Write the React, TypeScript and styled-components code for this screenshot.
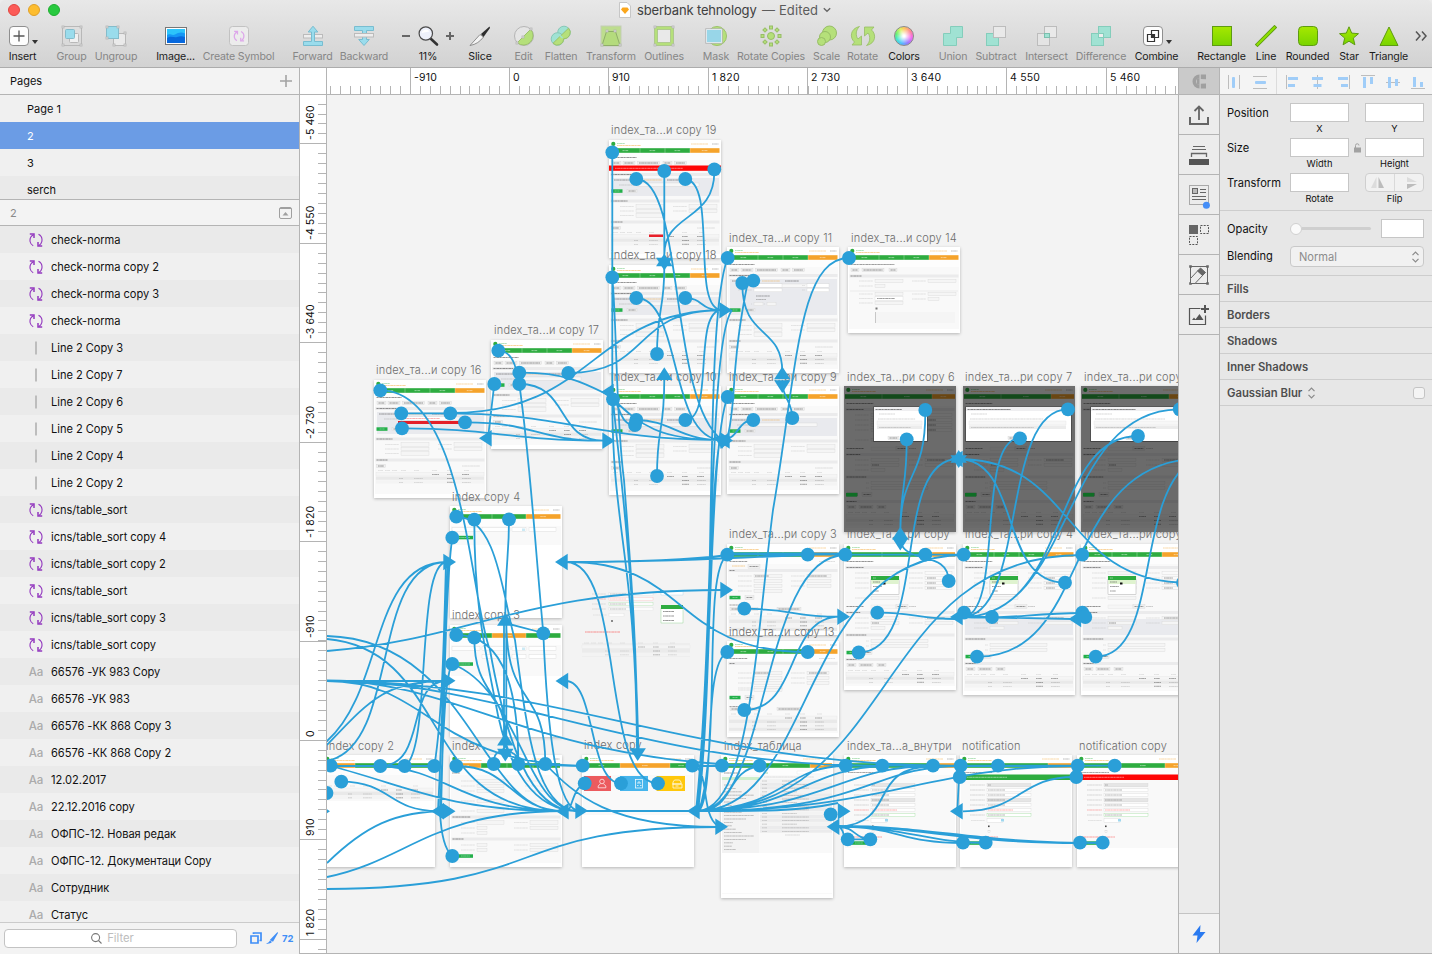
import React from "react";
import styled, { createGlobalStyle, css } from "styled-components";

const BLUE = "#2a9fd8";
const GREEN = "#2eac40";
const ORANGE = "#f5a32b";
const EDGE = "#b4b4b4";

const Global = createGlobalStyle`
  * { box-sizing: border-box; }
  body { margin: 0; font-family: Inter, "Liberation Sans", sans-serif; font-size: 12px; color: #111; overflow: hidden; }
  svg { display: block; flex: none; }
`;

/* ---------- window ---------- */

const Window = styled.div`
  width: 1432px;
  height: 954px;
  display: flex;
  flex-direction: column;
  background: #ececec;
  overflow: hidden;
`;
const Chrome = styled.header`
  height: 68px;
  background: linear-gradient(#e8e8e8, #d2d2d2);
  border-bottom: 1px solid #acacac;
  border-radius: 5px 5px 0 0;
`;
const TitleBar = styled.div`
  height: 21px;
  display: flex;
  align-items: center;
  padding: 0 0 1px 8px;
`;
const Light = styled.i<{ $c: string; $b: string }>`
  width: 12px;
  height: 12px;
  margin-right: 8px;
  border-radius: 50%;
  background: ${(p) => p.$c};
  border: 1px solid ${(p) => p.$b};
`;
const Title = styled.div`
  display: flex;
  align-items: center;
  margin-left: 551px;
  font-size: 13px;
  letter-spacing: -0.16px;
  color: #404040;
  white-space: pre;
  svg { margin-right: 6px; }
  svg:last-child { margin: 0 0 0 5px; }
`;
const Edited = styled.span`
  color: #5c5c5c;
  letter-spacing: 0.1px;
  margin-left: 2px;
`;
const Toolbar = styled.div`
  display: flex;
  height: 46px;
  padding-top: 4px;
`;
const Tool = styled.div<{ $w: number; $gap: number; $off?: boolean }>`
  width: ${(p) => p.$w}px;
  margin-left: ${(p) => p.$gap}px;
  flex: none;
  display: flex;
  flex-direction: column;
  align-items: center;
  color: ${(p) => (p.$off ? "#868686" : "#1c1c1c")};
`;
const ToolIcon = styled.div`
  height: 22px;
  display: flex;
  justify-content: center;
  align-items: center;
`;
const ToolLabel = styled.span`
  font-size: 10.6px;
  letter-spacing: -0.16px;
  line-height: 14px;
  margin-top: 3px;
  white-space: nowrap;
`;

const Body = styled.div`
  height: 886px;
  display: flex;
`;

/* ---------- left sidebar ---------- */

const Sidebar = styled.aside`
  width: 300px;
  flex: none;
  display: flex;
  flex-direction: column;
  border-right: 1px solid ${EDGE};
  background: #efefef;
`;
const SideHead = styled.div<{ $h: number; $muted?: boolean }>`
  height: ${(p) => p.$h}px;
  flex: none;
  display: flex;
  align-items: center;
  justify-content: space-between;
  padding: 0 7px 0 10px;
  background: #f3f3f3;
  border-bottom: 1px solid ${EDGE};
  font-size: 11px;
  color: ${(p) => (p.$muted ? "#8a8a8a" : "#111")};
`;
const PageList = styled.div`
  height: 105px;
  flex: none;
  overflow: hidden;
  border-bottom: 1px solid ${EDGE};
`;
const PageRow = styled.div<{ $on?: boolean; $alt?: boolean }>`
  height: 27px;
  padding: 1px 0 0 27px;
  line-height: 27px;
  font-size: 11px;
  background: ${(p) => (p.$on ? "#6b9ce5" : p.$alt ? "#eaeaea" : "#f0f0f0")};
  color: ${(p) => (p.$on ? "#fff" : "#111")};
`;
const LayerList = styled.div`
  flex: 1;
  overflow: hidden;
`;
const LayerRow = styled.div`
  height: 27px;
  display: flex;
  align-items: center;
  padding-top: 1px;
  font-size: 11.1px;
  letter-spacing: -0.04px;
  background: #f0f0f0;
  &:nth-child(odd) { background: #eaeaea; }
`;
const LayerIcon = styled.span`
  width: 51px;
  flex: none;
  padding-left: 21px;
  display: flex;
  justify-content: center;
  color: #ababab;
  font-size: 11.5px;
  font-weight: 500;
`;
const Footer = styled.div`
  height: 32px;
  flex: none;
  display: flex;
  align-items: center;
  padding: 0 0 1px 4px;
  border-top: 1px solid #cbcbcb;
  background: #f3f3f3;
`;
const Filter = styled.div`
  width: 233px;
  height: 19px;
  display: flex;
  align-items: center;
  justify-content: center;
  gap: 5px;
  padding-left: 6px;
  padding-right: 22px;
  border: 1px solid #c3c3c3;
  border-radius: 4px;
  background: #fff;
  color: #bdbdbd;
  font-size: 11.3px;
`;
const FooterIcons = styled.div`
  display: flex;
  align-items: center;
  gap: 4px;
  margin-left: 13px;
  color: #3f8ef7;
  font-size: 9.5px;
  font-weight: 700;
`;

/* ---------- canvas and rulers ---------- */

const Center = styled.main`
  width: 878px;
  flex: none;
  display: grid;
  grid-template-columns: 27px 851px;
  grid-template-rows: 27px 859px;
`;
const Corner = styled.div`
  background: #fff;
  border-right: 1px solid ${EDGE};
  border-bottom: 1px solid ${EDGE};
`;
const RulerSvg = styled.svg`
  background: #fff;
  font-size: 10.5px;
  fill: #111;
`;
const Canvas = styled.div`
  position: relative;
  overflow: hidden;
  background: #f3f3f3;
  border-bottom: 1px solid ${EDGE};
`;
const Board = styled.svg<{ $x: number; $y: number; $bare?: boolean }>`
  position: absolute;
  left: ${(p) => p.$x - 327}px;
  top: ${(p) => p.$y - 95}px;
  ${(p) =>
    !p.$bare &&
    css`
      background: #fff;
      box-shadow: 0 1px 3px rgba(0, 0, 0, 0.26);
    `}
`;
const BoardName = styled.span<{ $x: number; $y: number }>`
  position: absolute;
  left: ${(p) => p.$x - 327}px;
  top: ${(p) => p.$y - 95 - 8}px;
  font-size: 11px;
  font-weight: 300;
  line-height: 16px;
  letter-spacing: 0.2px;
  white-space: nowrap;
  color: #6c6c6c;
`;
const Links = styled.svg`
  position: absolute;
  inset: 0;
`;

/* ---------- right side ---------- */

const Strip = styled.nav`
  width: 42px;
  flex: none;
  display: flex;
  flex-direction: column;
  background: #ebebeb;
  border-left: 1px solid ${EDGE};
  border-right: 1px solid ${EDGE};
`;
const StripCell = styled.div<{ $h?: number; $dark?: boolean; $last?: boolean }>`
  height: ${(p) => p.$h ?? 40}px;
  flex: none;
  display: flex;
  align-items: center;
  justify-content: center;
  border-bottom: 1px solid ${EDGE};
  background: ${(p) => (p.$dark ? "#cacaca" : "#ececec")};
  ${(p) =>
    p.$last &&
    css`
      margin-top: auto;
      border-top: 1px solid #c4c4c4;
      background: #f2f2f2;
    `}
`;
const Inspector = styled.aside`
  flex: 1;
  background: #e7e7e7;
  border-bottom: 1px solid ${EDGE};
`;
const AlignRow = styled.div`
  height: 27px;
  background: #f4f4f4;
  border-bottom: 1px solid ${EDGE};
`;
const Group = styled.section<{ $h: number }>`
  height: ${(p) => p.$h}px;
  padding: 8px 8px 0 7px;
  border-bottom: 1px solid #cdcdcd;
  font-size: 11.1px;
`;
const Row = styled.div<{ $h: number }>`
  height: ${(p) => p.$h}px;
  display: flex;
  align-items: flex-start;
`;
const RowName = styled.span`
  width: 63px;
  line-height: 20px;
`;
const Col = styled.div<{ $gap?: number; $w?: number }>`
  width: ${(p) => p.$w ?? 59}px;
  margin-left: ${(p) => p.$gap ?? 0}px;
  font-size: 9.3px;
  line-height: 13px;
  text-align: center;
`;
const Input = styled.div`
  height: 19px;
  background: #fff;
  border: 1px solid #c6c6c6;
`;
const Lock = styled.div`
  width: 16px;
  height: 19px;
  display: flex;
  align-items: center;
  justify-content: center;
`;
const Flip = styled.div`
  height: 19px;
  display: flex;
  align-items: center;
  justify-content: space-around;
  border: 1px solid #cfcfcf;
  border-radius: 4px;
  background: #f1f1f1;
`;
const Divider = styled.i`
  width: 1px;
  height: 17px;
  background: #d9d9d9;
`;
const Slider = styled.div`
  width: 81px;
  height: 19px;
  margin-right: 10px;
  display: flex;
  align-items: center;
`;
const Knob = styled.i`
  width: 12px;
  height: 12px;
  flex: none;
  border-radius: 50%;
  background: #fafafa;
  border: 1px solid #d0d0d0;
`;
const Track = styled.i`
  flex: 1;
  height: 3px;
  border-radius: 0 2px 2px 0;
  background: #cfcfcf;
`;
const Select = styled.div`
  width: 134px;
  height: 21px;
  display: flex;
  align-items: center;
  justify-content: space-between;
  padding: 0 3px 0 8px;
  border: 1px solid #c9c9c9;
  border-radius: 4px;
  background: #f1f1f1;
  color: #8c8c8c;
`;
const Section = styled.div`
  height: 26px;
  display: flex;
  align-items: center;
  padding: 1px 7px 0 7px;
  border-bottom: 1px solid #cdcdcd;
  font-size: 11.3px;
  font-weight: 600;
  color: #4e4e4e;
  svg { margin-left: 5px; }
`;
const Check = styled.i`
  width: 12px;
  height: 12px;
  margin-left: auto;
  border: 1px solid #c4c4c4;
  border-radius: 3px;
  background: #f4f4f4;
`;

/* ---------- icons ---------- */

const aqua = "#9adcec";
const mint = "#a0e2d3";
const lime = "#b5e07a";

const SymPaths = () => (
  <g>
    <path d="M4.500 1.700C1.600 3.200.6 6.200 1.200 9c.4 1.800 1.600 3 3 3.700" />
    <path d="M.8 1h4.200v4" strokeWidth="1.500" />
    <path d="M9.500 1.300c2.900 1.500 3.900 4.500 3.300 7.300-.4 1.800-1.400 3-2.800 3.900" />
    <path d="M13.200 13H9V9" strokeWidth="1.500" />
  </g>
);
const Sym = () => (
  <svg width="14" height="14" viewBox="0 0 14 14" fill="none" stroke="#9338bf" strokeWidth="1.100"><SymPaths /></svg>
);
const Icon = ({ children, w = 22 }: { children: React.ReactNode; w?: number }) => (
  <svg width={w} height={22} viewBox={`0 0 ${w} 22`} fill="none">{children}</svg>
);
const dots = (pts: number[][]) =>
  pts.map(([x, y]) => <rect key={`${x}-${y}`} x={x - 1} y={y - 1} width={2} height={2} fill="#e8e8e8" stroke="#b5b5b5" strokeWidth={0.8} />);

const icons: Record<string, React.ReactNode> = {
  insert: (
    <Icon w={30}>
      <rect x="1.500" y="1.500" width="19" height="19" rx="3.500" fill="#fdfdfd" stroke="#8f8f8f" />
      <path d="M11 5.500v11M5.500 11h11" stroke="#555" strokeWidth="1.300" />
      <path d="M24 15h6l-3 4z" fill="#333" />
    </Icon>
  ),
  group: (
    <Icon>
      <rect x="1.500" y="1.500" width="19" height="19" stroke="#b8b8b8" />
      <rect x="8.500" y="8.500" width="9" height="9" rx="1" fill="#f0f0f0" stroke="#b8b8b8" />
      <rect x="4.500" y="4.500" width="9" height="9" rx="1" fill={aqua} stroke="#84bccb" />
      {dots([[2, 2], [20, 2], [2, 20], [20, 20]])}
    </Icon>
  ),
  ungroup: (
    <Icon>
      <rect x="8.500" y="8.500" width="12" height="12" fill="#eaeaea" stroke="#b8b8b8" />
      {dots([[20, 8], [20, 20], [9, 20]])}
      <rect x="1.500" y="1.500" width="12" height="12" fill={aqua} stroke="#84bccb" />
      {dots([[2, 2], [13, 2], [2, 13]])}
    </Icon>
  ),
  image: (
    <Icon>
      <rect x=".5" y="2.500" width="21" height="17" fill="#fff" stroke="#777" />
      <rect x="2" y="4" width="18" height="14" fill="#2cc4fb" />
      <path d="M2 10c3-2 5 1 8-.5s6-3 10-1V18H2z" fill="#1597f5" />
      <path d="M2 13c4-3 7 0 10-1s5-1 8 0v6H2z" fill="#0768dd" />
    </Icon>
  ),
  forward: (
    <Icon>
      <rect x="1.500" y="9.500" width="19" height="3.500" fill="#eee" stroke="#bbb" />
      <path d="M1.500 16.500h8V7H6.200L11 1.200 15.800 7h-3.300v9.500h8v4h-19z" fill={aqua} stroke="#78bdd0" />
    </Icon>
  ),
  backward: (
    <Icon>
      <path d="M1.500 1.500h19v4h-7v9h2.800L11 20.500 5.700 14.500h3.800v-9h-8z" fill={aqua} stroke="#78bdd0" />
      <rect x="1.500" y="8.500" width="19" height="3.500" fill="#eee" stroke="#bbb" />
    </Icon>
  ),
  minus: <Icon w={10}><path d="M1 11h8" stroke="#666" strokeWidth="2" /></Icon>,
  plus: <Icon w={10}><path d="M1 11h8M5 7v8" stroke="#666" strokeWidth="2" /></Icon>,
  zoom: (
    <Icon>
      <path d="M13.500 13.500l6.500 6" stroke="#333" strokeWidth="2.600" strokeLinecap="round" />
      <circle cx="8.800" cy="8.500" r="6.700" fill="#eef1fb" stroke="#4a4a4a" strokeWidth="1.200" />
      <path d="M4.500 8a4.500 4.500 0 0 1 8-1.500z" fill="#fff" />
    </Icon>
  ),
  slice: (
    <Icon>
      <path d="M11 9.500l3.500 2.500C11 16.500 7 19.500 1 20.500z" fill="#f4f4f4" stroke="#777" strokeWidth=".8" />
      <path d="M12 9L20.500 1.500 21 3l-6.500 9z" fill="#2d2d2d" />
    </Icon>
  ),
  edit: (
    <Icon>
      <circle cx="11" cy="11" r="9.500" fill="#e5e5e5" stroke="#b5b5b5" />
      <path d="M4.300 17.700A9.500 9.500 0 0 0 17.700 4.300z" fill={lime} stroke="#9cc26a" />
      {dots([[4, 18], [10, 12], [18, 4]])}
    </Icon>
  ),
  flatten: (
    <Icon>
      <g fill={mint} stroke="#86c8b8"><circle cx="14" cy="7.500" r="6.300" /><circle cx="7.500" cy="14" r="6.300" /></g>
      <path d="M3 18.300L18.500 3.200A6.300 6.300 0 0 1 13.700 13.800 6.300 6.300 0 0 1 3 18.300z" fill={lime} stroke="#9cc26a" />
      <path d="M9.500 9l3.500 3.500-1 1L8.500 10z" fill={mint} />
    </Icon>
  ),
  transform: (
    <Icon>
      <rect x="1" y="1" width="20" height="20" fill="#bddd8e" stroke="#c3cdb5" />
      <path d="M6.500 6.500h9l4.500 14H2z" fill="#b4db7d" stroke="#8fae69" />
      {dots([[2, 20], [20, 20], [7, 6], [15, 6]])}
    </Icon>
  ),
  outlines: (
    <Icon>
      <rect x="3" y="3" width="16" height="16" fill="#e9e9e9" stroke={lime} strokeWidth="3" />
      <rect x="1.500" y="1.500" width="19" height="19" stroke="#a3bf80" strokeWidth=".7" />
      <rect x="4.500" y="4.500" width="13" height="13" stroke="#a3bf80" strokeWidth=".7" />
      {dots([[2, 2], [20, 2], [2, 20], [20, 20]])}
    </Icon>
  ),
  mask: (
    <Icon>
      <circle cx="12" cy="11" r="9.500" fill={lime} stroke="#9cc26a" />
      <rect x="1.500" y="4.500" width="15" height="13" fill="#98d6e8" stroke="#e4eef3" />
      <rect x=".7" y="3.700" width="16.600" height="14.600" stroke="#b4b4b4" strokeWidth=".8" />
    </Icon>
  ),
  copies: (
    <Icon>
      <g fill={lime} stroke="#97bd66">
        <circle cx="11" cy="11" r="3.500" />
        {[0, 45, 90, 135, 180, 225, 270, 315].map((a) => (
          <rect key={a} x="9.500" y="1" width="3" height="3" transform={`rotate(${a} 11 11)`} />
        ))}
      </g>
    </Icon>
  ),
  scale: (
    <Icon>
      <g fill={lime} stroke="#97bd66">
        <circle cx="13.500" cy="8" r="7" />
        <circle cx="9" cy="12" r="5.500" />
        <circle cx="5.500" cy="16.500" r="4" />
      </g>
    </Icon>
  ),
  rotate: (
    <Icon w={26}>
      <g fill={lime} stroke="#97bd66" strokeWidth=".8">
        <path d="M9.500 1.500C0 3.500-.5 13 4.500 17L2 20h9.500v-9L8 14C5.500 11 5.500 5 9.500 1.500z" />
        <path d="M16.500 20.500c9.500-2 10-11.500 5-15.500L24 2h-9.500v9L18 8c2.500 3 2.500 9-1.500 12.500z" />
      </g>
    </Icon>
  ),
  union: <Icon><path d="M8.500 1.500h12v11h-6v8h-13v-12h7z" fill={mint} stroke="#84cdbb" /></Icon>,
  subtract: (
    <Icon>
      <rect x="1.500" y="8.500" width="12" height="12" fill={mint} stroke="#84cdbb" />
      <rect x="8.500" y="1.500" width="12" height="11" fill="#e9e9e9" stroke="#bcbcbc" />
    </Icon>
  ),
  intersect: (
    <Icon>
      <rect x="1.500" y="8.500" width="12" height="12" fill="#e4e4e4" stroke="#bcbcbc" />
      <rect x="8.500" y="1.500" width="12" height="11" fill="#e9e9e9" stroke="#bcbcbc" />
      <rect x="8.500" y="8.500" width="5" height="4" fill={mint} stroke="#7cbfae" />
    </Icon>
  ),
  difference: (
    <Icon>
      <rect x="1.500" y="8.500" width="12" height="12" fill={mint} stroke="#84cdbb" />
      <rect x="8.500" y="1.500" width="12" height="11" fill={mint} stroke="#84cdbb" />
      <rect x="8.500" y="8.500" width="5" height="4" fill="#eee" stroke="#84cdbb" />
    </Icon>
  ),
  combine: (
    <Icon w={30}>
      <rect x="1.500" y="1.500" width="19" height="19" rx="3.500" fill="#fdfdfd" stroke="#8f8f8f" />
      <path d="M5.500 9.500h7v7h-7zM9.500 5.500h7v7h-7z" stroke="#333" strokeWidth="1.200" />
      <rect x="9.500" y="9.500" width="3" height="3" fill="#333" />
      <path d="M24 15h6l-3 4z" fill="#333" />
    </Icon>
  ),
  rectangle: <Icon><rect x="1.500" y="1.500" width="19" height="19" fill="url(#lime)" stroke="#5e9b12" /></Icon>,
  line: <Icon><path d="M2.500 19.500L19.500 2.500" stroke="#5e9b12" strokeWidth="3.800" strokeLinecap="square" /><path d="M2.500 19.500L19.500 2.500" stroke="#8fe000" strokeWidth="2" strokeLinecap="square" /></Icon>,
  rounded: <Icon><rect x="1.500" y="1.500" width="19" height="19" rx="4" fill="url(#lime)" stroke="#5e9b12" /></Icon>,
  star: <Icon><path d="M11 1.800l2.700 6.300 6.800.6-5.200 4.400 1.600 6.700L11 16.200l-5.900 3.600 1.600-6.700L1.500 8.700l6.800-.6z" fill="url(#lime)" stroke="#5e9b12" /></Icon>,
  triangle: <Icon><path d="M11 2l9 18.500H2z" fill="url(#lime)" stroke="#5e9b12" /></Icon>,
  more: <Icon w={12}><path d="M1 6.500l4 4.500-4 4.500M7 6.500l4 4.500-4 4.500" stroke="#555" strokeWidth="1.500" /></Icon>,
  symbol: (
    <Icon>
      <rect x="1.500" y="1.500" width="19" height="19" rx="3" fill="#ececec" stroke="#c2c2c2" />
      <g transform="translate(5.500 5.500) scale(.8)" stroke="#dda6ea" strokeWidth="1.600"><SymPaths /></g>
    </Icon>
  ),
};

const Wheel = styled.i`
  width: 20px;
  height: 20px;
  border-radius: 50%;
  border: 1px solid #8a8a8a;
  background: radial-gradient(circle, #fff 8%, rgba(255, 255, 255, 0.1) 60%),
    conic-gradient(#ffc04a, #ff7a8a 15%, #f45af0 28%, #8a6cff 42%, #3fb4ff 55%, #2fe6c8 68%, #5cf060 80%, #d8f050 92%, #ffc04a);
`;

// id, label, left edge, right edge, dimmed
const tools: [string, string, number, number, boolean?][] = [
  ["insert", "Insert", 9, 36], ["group", "Group", 57, 86, true], ["ungroup", "Ungroup", 95, 137, true],
  ["image", "Image...", 157, 194], ["symbol", "Create Symbol", 203, 274, true],
  ["forward", "Forward", 293, 332, true], ["backward", "Backward", 341, 387, true],
  ["minus", "", 401, 411], ["zoom", "11%", 417, 439], ["plus", "", 445, 455], ["slice", "Slice", 468, 492],
  ["edit", "Edit", 514, 533, true], ["flatten", "Flatten", 544, 578, true], ["transform", "Transform", 586, 636, true],
  ["outlines", "Outlines", 644, 684, true], ["mask", "Mask", 703, 729, true], ["copies", "Rotate Copies", 737, 805, true],
  ["scale", "Scale", 813, 840, true], ["rotate", "Rotate", 848, 877, true], ["colors", "Colors", 888, 920],
  ["union", "Union", 939, 967, true], ["subtract", "Subtract", 975, 1017, true], ["intersect", "Intersect", 1025, 1068, true],
  ["difference", "Difference", 1076, 1126, true], ["combine", "Combine", 1135, 1178],
  ["rectangle", "Rectangle", 1197, 1246], ["line", "Line", 1256, 1276], ["rounded", "Rounded", 1286, 1329],
  ["star", "Star", 1339, 1359], ["triangle", "Triangle", 1369, 1408], ["more", "", 1415, 1427],
];

/* ---------- artboard thumbnails ---------- */

type R = { x: number; y: number; w: number; h: number; f: string; s?: string };
const Box = ({ x, y, w, h, f, s }: R) => (
  <rect x={x} y={y} width={w} height={h} fill={f} stroke={s} strokeWidth={s ? 0.3 : 0} />
);
const Ink = ({ x, y, w, c = "#777", t = 0.8 }: { x: number; y: number; w: number; c?: string; t?: number }) => (
  <path d={`M${x} ${y}h${w}`} stroke={c} strokeWidth={t} strokeDasharray="1.700 .25 .9 .2 2.600 .3" opacity={0.58} />
);
const Field = ({ x, y, w = 28, lx, lw = 14, f = "#f5f5f5" }: { x: number; y: number; w?: number; lx?: number; lw?: number; f?: string }) => (
  <g>
    <Ink x={lx ?? x - lw - 2} y={y} w={lw} c="#bbb" t={0.6} />
    <Box x={x} y={y - 1.700} w={w} h={3.400} f={f} s="#cdcdcd" />
  </g>
);
const Bar = ({ y, w = 13 }: { y: number; w?: number }) => (
  <g><Box x={1.500} y={y - 1.500} w={109} h={3} f="#ebebec" /><Ink x={2.500} y={y} w={w} c="#222" /></g>
);
const Btn = ({ x, y, w }: { x: number; y: number; w: number }) => (
  <g><Box x={x} y={y - 1.700} w={w} h={3.400} f="#efefef" s="#ccc" /><Ink x={x + 1.500} y={y} w={w - 3} c="#333" /></g>
);
const Go = ({ y, w = 11, x = 2.500 }: { y: number; w?: number; x?: number }) => (
  <g><Box x={x} y={y - 1.700} w={w} h={3.500} f="#23b04a" /><Ink x={x + 3} y={y} w={w - 6} c="#fff" t={0.6} /></g>
);
const Table = ({ y, rows = 2 }: { y: number; rows?: number }) => (
  <g>
    {[4, 11, 18, 27, 40, 58, 73, 90].map((x) => <Ink key={x} x={x} y={y} w={5} c="#aaa" t={0.5} />)}
    <Box x={2} y={y + 2} w={108} h={3.500} f="#f5f5f5" s="#e0e0e0" />
    <Ink x={58} y={y + 4} w={7} c="#333" t={0.7} /><Ink x={73} y={y + 4} w={6} c="#333" t={0.7} /><Ink x={88} y={y + 4} w={7} c="#333" t={0.7} />
    {Array.from({ length: rows }, (_, i) => (
      <g key={i}>
        <Box x={2} y={y + 6 + i * 3.800} w={108} h={3.300} f={i % 2 ? "#f4f4f4" : "#e9e9e9"} />
        <Ink x={25} y={y + 8 + i * 3.800} w={4} c="#888" t={0.6} /><Ink x={40} y={y + 8 + i * 3.800} w={9} c="#999" t={0.6} />
        <Ink x={73} y={y + 8 + i * 3.800} w={7} c="#333" t={0.7} /><Ink x={88} y={y + 8 + i * 3.800} w={9} c="#888" t={0.6} />
      </g>
    ))}
  </g>
);
type Seg = [number, number, "g" | "o"];
const Head = ({ nav, h }: { nav: Seg[]; h: number }) => (
  <g>
    <Box x={1} y={13} w={110} h={h - 17} f="#f9f9f9" />
    <Box x={1} y={13} w={110} h={7} f="#fdfdfd" />
    <circle cx={4.300} cy={3.900} r={2.100} fill={GREEN} />
    <Ink x={8} y={3.500} w={8} c={GREEN} t={0.6} />
    <Ink x={8} y={5.500} w={24} c={ORANGE} t={0.8} />
    <Ink x={82} y={4} w={17} c={ORANGE} t={0.7} />
    <Ink x={103} y={4} w={6.500} c="#666" t={0.7} />
    {nav.map(([a, b, k]) => (
      <g key={a}>
        <Box x={a} y={8.200} w={b - a} h={4.600} f={k === "g" ? GREEN : ORANGE} />
        <Ink x={(a + b) / 2 - 3} y={10.600} w={6} c="#fff" t={0.8} />
      </g>
    ))}
    {nav.slice(1).map(([a]) => <path key={a} d={`M${a} 8.200v4.600`} stroke="#fff" strokeWidth=".3" />)}
  </g>
);
const four: Seg[] = [[2, 31, "g"], [31, 56, "g"], [56, 81, "g"], [81, 110.500, "o"]];
const three: Seg[] = [[1, 38, "g"], [38, 88, "g"], [88, 111, "o"]];

const Detail = ({ h, alert, err, ext = 0 }: { h: number; alert?: boolean; err?: boolean; ext?: number }) => {
  const a = alert ? 6 : 0;
  const b = a + ext;
  return (
    <g>
      <Head nav={four} h={h} />
      <Ink x={2.500} y={17.500} w={25} c="#222" />
      <Btn x={3} y={23} w={9} /><Btn x={14} y={23} w={12} /><Btn x={28.500} y={23} w={22} /><Btn x={54} y={23} w={9} /><Btn x={65.500} y={23} w={12} />
      {alert && <g><Box x={0} y={25.500} w={112} h={5.300} f="#fe0505" /><Ink x={6} y={28.300} w={68} c="#fff" t={0.8} /></g>}
      <Bar y={28.500 + a} w={20} />
      <Box x={3} y={32 + a} w={107} h={18 + ext} f="#e9eaee" />
      <Ink x={5} y={34 + a} w={25} c="#333" /><Ink x={35} y={34 + a} w={18} c={ORANGE} t={0.7} /><Ink x={58} y={34 + a} w={14} c="#333" />
      <Box x={28} y={37 + a} w={62} h={3.200} f="#f7f7f7" s="#ccc" />
      <Ink x={10} y={39 + a} w={16} c="#999" t={0.6} />
      {err && <g><Box x={27} y={37} w={50} h={3} f="#fff" /><Ink x={24} y={38.500} w={42} c="#e22" t={0.6} /><Box x={24} y={41} w={70} h={3} f="#e31f28" /></g>}
      {ext > 12 && (
        <g>
          <Field x={27} y={38.500} f="#fff" /><Field x={27} y={43} f="#fff" /><Field x={80} y={38.500} w={22} lw={3} f="#fff" /><Field x={80} y={43} w={22} lw={3} f="#fff" />
          <Ink x={29} y={49} w={14} c="#333" t={0.7} /><Ink x={29} y={52.500} w={10} c="#666" t={0.7} />
          <Field x={27} y={57} w={9} lw={1} /><Field x={40} y={57} w={9} lw={1} />
        </g>
      )}
      <Go y={45 + b} /><Btn x={18} y={45 + b} w={10} />
      <Bar y={55 + b} w={16} />
      {[60.500, 65, 69.500].map((y) => <Field key={y} x={27} y={y + b} />)}
      <Field x={80} y={60.500 + b} /><Field x={80} y={65 + b} />
      <Bar y={76 + b} w={11} />
      <Btn x={2.500} y={82 + b} w={9} />
      <Ink x={88} y={82 + b} w={18} c="#999" t={0.5} />
      <Table y={86.500 + b} />
      {alert && <Box x={40} y={94.500} w={14} h={2.500} f="#e8202a" />}
    </g>
  );
};

const Simple = () => (
  <g>
    <Head nav={four} h={86} />
    <Ink x={2.500} y={17.500} w={44} c="#333" />
    <Btn x={3} y={23} w={8} /><Btn x={14} y={23} w={22} /><Btn x={41} y={23} w={8} />
    <Bar y={29} w={11} />
    <Field x={27} y={34} /><Field x={27} y={39} w={10} /><Field x={80} y={34} />
    <path d="M2 44h108" stroke="#ddd" strokeWidth=".5" />
    <Field x={27} y={47} /><Field x={27} y={51.500} f="#fff" /><Field x={27} y={56} /><Field x={80} y={47} /><Field x={80} y={52} w={11} />
    <Ink x={29} y={51.500} w={18} c="#333" />
    <Box x={27.500} y={60.500} w={2} h={2} f="#777" />
    <Box x={27} y={65} w={80} h={11} f="#f5f5f5" /><path d="M27.500 65v11" stroke="#999" strokeWidth=".5" />
  </g>
);

const Search = ({ h, k = 0 }: { h: number; k?: number }) => (
  <g>
    <Head nav={four} h={h} />
    <Ink x={2.500} y={17.500} w={18} c="#333" />
    <Ink x={92} y={17.500} w={16} c="#999" t={0.5} />
    {k === 0 && <g><Ink x={5} y={22} w={13} c={ORANGE} /><Btn x={21} y={22.500} w={12} /></g>}
    <Bar y={k ? 22.500 : 26.500} w={5} />
    {[32, 37, 42, 47].map((y) => <Field key={y} x={27} y={y} />)}
    {[32, 37, 42].map((y) => <Field key={y} x={80} y={y} w={k ? 22 : 24} />)}
    <Ink x={28} y={32} w={14} c="#333" /><Ink x={82} y={32} w={18} c="#333" />
    {k > 0 && <Field x={27} y={49} />}
    <Go y={53.500 + k / 3} /><Btn x={18} y={53.500 + k / 3} w={9} />
    <Ink x={2.500} y={61 + k / 2} w={16} c="#444" />
    <Btn x={3} y={65 + k / 3} w={28} /><Btn x={50} y={65 + k / 3} w={24} />
    <Table y={70 + k / 3} rows={3} />
  </g>
);

const Registry = ({ h, nav = four, panel, menu = true }: { h: number; nav?: Seg[]; panel?: boolean; menu?: boolean }) => {
  const d = h > 146 ? 4 : 0;
  return (
    <g>
      <Head nav={nav} h={h} />
      <Ink x={2.500} y={17.500} w={27} c="#222" />
      <Bar y={23.500} w={17} />
      {[29, 34, 39, 44, 54].map((y) => <Field key={y} x={27} y={y} />)}
      {[29, 34, 39, 44].map((y) => <Field key={y} x={81} y={y} w={27} f="#fafafa" />)}
      <Ink x={83} y={34} w={9} c="#333" /><Ink x={83} y={39} w={9} c="#333" /><Ink x={83} y={44} w={9} c="#333" />
      <Ink x={2.500} y={62.500} w={17} c="#222" /><Box x={27} y={61} w={25} h={3.500} f="#f6f6f6" s="#ddd" /><Btn x={52} y={62.500} w={12} /><Ink x={65} y={62.500} w={7} c="#999" />
      <Bar y={68.500} w={14} />
      {panel && <Box x={2} y={75} w={108} h={16} f="#e9eaee" />}
      <Field x={27} y={74} /><Field x={27} y={79} /><Field x={27} y={84} w={14} /><Field x={81} y={74} /><Field x={81} y={79} />
      <Ink x={28} y={79} w={7} c="#333" /><Ink x={83} y={74} w={18} c="#333" />
      <Bar y={91 + d} w={20} />
      <Field x={27} y={97 + d} w={57} lw={3} /><Field x={27} y={102 + d} w={57} lw={3} />
      <Go y={108.500 + d} /><Btn x={18} y={108.500 + d} w={10} />
      <Bar y={115.500 + d} w={10} />
      <Btn x={3} y={121 + d} w={9} /><Btn x={15} y={121 + d} w={14} /><Btn x={33} y={121 + d} w={9} />
      <Table y={126.500 + d} />
      {menu && (
        <g>
          <Box x={27} y={35.500} w={28} h={15} f="#fff" s="#777" />
          <Box x={27} y={32} w={28} h={4} f={GREEN} />
          <Box x={27.300} y={36} w={27.400} h={4} f="#dff3cf" />
          <Ink x={29} y={34} w={3} c="#fff" /><Ink x={29} y={38} w={7} c="#333" /><Ink x={29} y={42.500} w={9} c="#333" /><Ink x={29} y={47} w={6} c="#333" />
          <path d="M39 38.500h2.500v2H39z" fill="#111" />
        </g>
      )}
    </g>
  );
};

const Modal = ({ x, w, b }: { x: number; w: number; b: number }) => (
  <g>
    <Registry h={146} nav={three} menu={false} />
    <rect width="112" height="146" fill="#000" opacity=".57" />
    <Box x={2} y={107} w={11} h={3.500} f="#0f6e25" />
    <Box x={x - 0.700} y={20.500} w={w + 1.400} h={35.500} f="#444" />
    <Box x={x} y={21} w={w} h={34} f="#fff" />
    <Box x={x} y={21} w={w} h={4} f="#efeff1" />
    <Ink x={x + 1.500} y={23.500} w={Math.min(w * 0.5, 43)} c="#111" />
    <Ink x={x + 5} y={28} w={16} c="#999" t={0.6} />
    <Ink x={x + 4} y={33} w={w * 0.700} c="#999" t={0.6} />
    <Box x={x + 3} y={35} w={w - 8} h={4} f="#f7f7f7" s="#ddd" />
    <Box x={x + 3} y={39.500} w={w - 8} h={3.500} f="#ececec" />
    <Ink x={x + 5} y={41.500} w={w * 0.600} c="#888" t={0.6} />
    <Btn x={b} y={52} w={11} />
  </g>
);

const Index = ({ nav, kind }: { nav: Seg[]; kind: 1 | 2 | 3 | 4 }) => (
  <g>
    <Head nav={nav} h={112} />
    {kind < 3 && <g><Box x={1} y={kind === 1 ? 39 : 51} w={110} h={kind === 1 ? 69 : 57} f="#fff" />
      <Field x={2} y={23.500} w={28} lx={2} lw={1} f="#fff" /><Field x={32} y={23.500} w={28} lx={32} lw={1} f="#fff" /><Field x={62} y={23.500} w={14} lx={62} lw={1} f="#fff" /><Field x={79} y={23.500} w={27} lx={79} lw={1} f="#fff" />
      <Box x={72} y={22.500} w={3} h={2.500} f="#cdeaf5" /></g>}
    {kind === 2 && <g><Field x={32} y={31.500} lx={32} lw={1} f="#fff" /><Field x={62} y={31.500} w={14} lx={62} lw={1} f="#fff" /><Field x={79} y={31.500} w={27} lx={79} lw={1} f="#fff" /></g>}
    {kind < 3 && <Go x={6} y={kind === 1 ? 31.500 : 39} w={17} />}
    {kind === 3 && (
      <g>
        <Ink x={2} y={18} w={8} c="#333" />
        {[26, 31, 36, 46, 56].map((y) => <Field key={y} x={27} y={y} w={27} />)}
        {[26, 31, 36, 46, 56].map((y) => <Ink key={y} x={75} y={y} w={20} c="#ccc" t={0.6} />)}
        <Bar y={62} w={18} /><Field x={27} y={67.500} w={27} /><Field x={27} y={73} w={10} /><Field x={27} y={78} w={10} />
        <Field x={80} y={67.500} /><Field x={80} y={73} />
        <Bar y={84} w={11} /><Field x={27} y={90} w={10} /><Field x={27} y={95} w={10} /><Field x={80} y={90} /><Field x={80} y={95} />
        <Go x={8} y={101} w={15} />
      </g>
    )}
    {kind === 4 && (
      <g>
        <Box x={1} y={46} w={110} h={62} f="#fff" />
        <Table y={31} rows={2} />
      </g>
    )}
  </g>
);

const Cards = () => (
  <g>
    <Head nav={[[1, 38, "g"], [38, 88, "o"], [88, 110.500, "g"]]} h={112} />
    <Box x={1} y={60} w={110} h={48} f="#fff" />
    <Box x={2} y={21} w={27} h={15} f="#ec5b5e" />
    <Box x={38} y={21} w={28} h={15} f="#46b5ec" />
    <Box x={74.500} y={21} w={28.500} h={15} f="#ffc80b" />
    <g fill="none" stroke="#fff" strokeWidth=".7">
      <circle cx="20" cy="26.500" r="2.300" /><path d="M18.500 28.700l-2.300 2.300v1.800h7.600V31l-2.300-2.300" />
      <rect x="53.500" y="24.500" width="7" height="8.500" /><path d="M55 30.500h1.500M58 30.500h1.500M55 28h4M57 26v2" />
      <path d="M91 27l1.500-2h5l1.500 2v2h-8zM90 29h10M91 29v4h9v-4M93.500 31h3" />
    </g>
  </g>
);

const TableBoard = () => (
  <g>
    <Head nav={[[1, 40, "g"], [40, 89, "g"], [89, 111, "o"]]} h={143} />
    <Box x={1} y={98} w={110} h={40} f="#fff" />
    <Ink x={3} y={18} w={16} c="#333" />
    <Box x={1} y={22} w={37} h={76} f="#f3f3f3" /><Box x={1} y={22} w={37} h={3} f="#cfeecb" />
    {Array.from({ length: 20 }, (_, i) => <Ink key={i} x={3} y={30 + i * 3.400} w={[8, 12, 18, 30, 22, 9][i % 6]} c="#555" t={0.6} />)}
    <Ink x={43} y={18} w={4} c={GREEN} /><Box x={76} y={16} w={30} h={3} f="#fff" s="#ddd" />
    <Ink x={43} y={22} w={50} c="#999" t={0.5} />
    {Array.from({ length: 15 }, (_, i) => (
      <g key={i}><Box x={39} y={24 + i * 3.600} w={72} h={3.300} f={i % 3 ? "#ebebec" : "#f3f3f3"} /><Ink x={41} y={26 + i * 3.600} w={5} c="#888" t={0.6} /><Ink x={61} y={26 + i * 3.600} w={i % 3 ? 27 : 15} c="#777" t={0.6} /></g>
    ))}
    <Ink x={64} y={80} w={15} c="#bbb" />
  </g>
);

const Notice = ({ color }: { color?: string }) => (
  <g>
    <Head nav={[[1, 44, "g"], [44, color ? 88 : 95, "g"], [color ? 88 : 95, 111, "o"]]} h={112} />
    <Box x={1} y={93} w={110} h={15} f="#fff" />
    <Ink x={4} y={17.500} w={28} c="#444" />
    {color && <g><Box x={0} y={19.500} w={112} h={5.500} f={color} /><Ink x={7} y={22.300} w={40} c="#fff" /></g>}
    {[27, 32, 37, 42, 47, 52, 57].map((y, i) => (
      <g key={y}>
        <Ink x={10} y={y + 3} w={15} c={i === 5 ? "#f33" : "#999"} t={0.6} />
        <Box x={27} y={y + 1.400} w={44} h={3.400} f={i === 0 || i === 3 ? "#e6e6e6" : "#fff"} s={i === 6 ? "#7cd07c" : "#ccc"} />
        <Ink x={28} y={y + 3} w={i === 0 ? 3 : i === 5 ? 25 : 17} c={i === 5 ? "#f22" : "#333"} t={0.6} />
      </g>
    ))}
    <Field x={27} y={65.500} w={16} f="#fff" /><Box x={41} y={64} w={3} h={2.500} f="#9fd8ef" />
    <Box x={28} y={70.500} w={1.600} h={1.600} f="#444" /><Box x={28} y={75.500} w={2} h={2} f="#fff" s="#bbb" />
    <Ink x={4} y={82} w={34} c="#f22" t={0.7} />
    <Go x={8} y={88} w={14} />
  </g>
);

// name, x, y, height, contents, caption x, caption centre y
const boards: [string, number, number, number, React.ReactNode, number, number][] = [
  ["index_та...и copy 19", 609, 140, 118, <Detail h={118} alert />, 611, 130],
  ["index_та...и copy 18", 609, 265, 108, <Detail h={108} />, 611, 255],
  ["index_та...и copy 11", 727, 247, 126, <Detail h={126} ext={18} />, 729, 238],
  ["index_та...и copy 14", 848, 247, 86, <Simple />, 851, 238],
  ["index_та...и copy 17", 491, 340, 109, <Detail h={109} />, 494, 330],
  ["index_та...и copy 16", 374, 380, 118, <Detail h={118} err ext={4} />, 376, 370],
  ["index_та...и copy 10", 609, 386, 109, <Detail h={109} />, 611, 377],
  ["index_та...ри copy 9", 727, 386, 108, <Detail h={108} />, 729, 377],
  ["index_та...ри copy 6", 844, 386, 146, <Modal x={30} w={53} b={44} />, 847, 377],
  ["index_та...ри copy 7", 963, 386, 146, <Modal x={3} w={105} b={45} />, 965, 377],
  ["index_та...ри copy", 1081, 386, 146, <Modal x={10} w={100} b={45} />, 1084, 377],
  ["index copy 4", 450, 506, 112, <Index nav={[[2, 42, "g"], [42, 76, "g"], [76, 110.500, "o"]]} kind={1} />, 452, 497],
  ["index copy 3", 450, 625, 112, <Index nav={[[2, 42, "g"], [42, 76, "o"], [76, 110.500, "g"]]} kind={2} />, 452, 615],
  ["index_та...ри copy 3", 727, 544, 91, <Search h={91} />, 729, 534],
  ["index_та...три copy", 844, 544, 146, <Registry h={146} nav={three} />, 847, 534],
  ["index_та...ри copy 4", 963, 544, 151, <Registry h={151} panel />, 965, 534],
  ["index_та...ри copy", 1081, 544, 151, <Registry h={151} panel />, 1084, 534],
  ["index_та...и copy 13", 727, 641, 96, <Search h={96} k={9} />, 729, 632],
  ["index copy 2", 323, 755, 112, <Index nav={[[2, 32, "o"], [32, 58, "g"], [58, 84, "g"], [84, 110.500, "g"]]} kind={4} />, 326, 746],
  ["index", 450, 755, 112, <Index nav={[[2, 31, "o"], [31, 57, "g"], [57, 83, "g"], [83, 110, "g"]]} kind={3} />, 452, 746],
  ["index copy", 582, 755, 112, <Cards />, 584, 745],
  ["index_таблица", 721, 755, 143, <TableBoard />, 724, 746],
  ["index_та...а_внутри", 844, 755, 112, <Notice />, 847, 746],
  ["notification", 960, 755, 112, <Notice color={GREEN} />, 962, 746],
  ["notification copy", 1077, 755, 112, <Notice color="#fe0505" />, 1079, 746],
];

const Loose = () => (
  <Board $bare $x={580} $y={590} width={112} height={68}>
    <g opacity=".75">
      {[4, 9, 14, 19].map((y, i) => (
        <g key={y}><Ink x={12} y={y} w={14} c={i === 1 ? "#f33" : "#aaa"} t={0.7} /><Box x={29} y={y - 1.700} w={44} h={3.400} f="#fff" s={i === 1 ? "#f99" : i === 2 ? "#7cd07c" : "#ccc"} /><Ink x={30} y={y} w={16} c={i === 1 ? "#f66" : "#444"} t={0.7} /></g>
      ))}
      <Field x={29} y={25} w={15} f="#fff" /><Box x={31} y={30} w={2} h={2} f="#666" />
      <Ink x={5} y={42} w={35} c="#f11" t={1} />
      <Box x={2} y={53} w={108} h={14} f="#ececec" />
      <Table y={53} />
    </g>
    <Box x={81} y={1} w={22} h={4} f="#fff" s="#8cc8e8" />
    <Box x={81} y={18} w={22} h={15} f="#fff" s="#5cc15c" /><Box x={81} y={15} w={22} h={4} f={GREEN} />
    <Ink x={83} y={21.500} w={11} c="#222" /><Ink x={83} y={26} w={11} c="#222" /><Ink x={83} y={30.500} w={11} c="#222" />
  </Board>
);

/* ---------- prototype links ---------- */

const nodes: [number, number][] = [
  [612.3, 152.3], [636.3, 179], [664.3, 171], [685.3, 179], [714.3, 169.3], [612.3, 277.3], [636.3, 298], [685.3, 298],
  [657, 354], [727.7, 258], [849, 258], [742.3, 283], [753.3, 280.7], [613, 399.3], [636.3, 420], [635, 425], [685.3, 420],
  [657, 476], [727.7, 397], [753.3, 420], [792.3, 418], [727.3, 554.7], [807.7, 554.7], [845.3, 554.7], [744.3, 608.7],
  [727.3, 652], [807.7, 652], [877.3, 612.7], [858.7, 652.5], [380.3, 390.3], [401.3, 413.3], [450.3, 413.3], [465, 422.3],
  [402, 428.3], [498.3, 350.7], [519.3, 372.7], [519.3, 384], [494.3, 384], [568.3, 373], [456.3, 516.7], [474.3, 519.7],
  [509, 519.3], [452.3, 537.7], [456.3, 635], [474.3, 637.7], [543.3, 633.3], [452.3, 664], [330.7, 765.7], [380.3, 766],
  [404.7, 766], [434.3, 766], [456.3, 766], [493.7, 764], [518.3, 764], [545.3, 764], [582.7, 765.7], [692.3, 765.7],
  [722, 765.7], [341.3, 781.7], [326.5, 793], [584.7, 783.3], [621, 783.3], [658, 783.3], [452.3, 856], [925.3, 410],
  [906.7, 439.3], [1068, 409.3], [1020, 438.3], [1138, 436], [1179.7, 409.3], [925.3, 554.7], [963.7, 554.7], [1082.3, 554.7],
  [948.7, 581], [1065, 582.7], [1183, 582.7], [964, 612.7], [992, 617], [1082.3, 612.7], [1085.3, 617], [977, 656.7],
  [1095.7, 656.7], [744.3, 710], [759.7, 765.7], [845.7, 765.7], [882.3, 765.7], [933, 765.7], [960.7, 765.7], [998, 765.7],
  [1077.7, 765.7], [1114.7, 765.7], [959.7, 777], [1076.3, 777], [830.7, 814.3], [847.7, 839.3], [870.3, 839.3],
  [963, 842.7], [985.7, 842.7], [1080, 842.7], [1102.7, 842.7],
];

// tip position and pointing direction
const arrows: [number, number, "r" | "l" | "u" | "d"][] = [
  [733, 590, "r"], [850, 616.7, "r"], [732, 310.3, "r"], [615, 440.7, "r"], [456, 562, "r"], [455.5, 680.7, "r"],
  [455.5, 811.3, "r"], [588, 810.7, "r"], [728, 826.7, "r"], [850.5, 811.3, "r"], [330, 811.3, "r"], [733, 440.5, "r"],
  [479, 438.3, "l"], [601, 392, "l"], [555, 562, "l"], [555.5, 681, "l"], [431, 811.3, "l"], [556, 811.3, "l"],
  [687, 811, "l"], [826.7, 826.7, "l"], [950, 811.3, "l"], [950, 617, "l"], [950, 459, "l"], [1068.5, 619, "l"], [717, 440.5, "l"],
  [664.3, 367.3, "u"], [505.3, 732.7, "u"], [505.3, 613, "u"], [664.3, 253.5, "u"], [782.3, 366.5, "u"], [900.3, 526.7, "u"],
  [958.7, 450, "u"],
  [637.7, 761, "d"], [505.3, 761.5, "d"], [664.3, 270.5, "d"], [782.3, 393, "d"], [900.3, 550.5, "d"], [958.7, 468, "d"], [722, 449, "d"],
];
const spin = { r: 0, d: 90, l: 180, u: 270 };

const paths = [
  "M612.3 152V400C612.3 530 636 560 637 750", "M612.3 277C617 330 616 420 624 480C630 560 637 640 637.500 750", "M613 399C617 450 634 560 638.500 750",
  "M636.3 179C685 179 668 400 722 440", "M664.3 171V255", "M714.3 169C716 222 664 212 664.3 255", "M685.3 179C718 182 690 310 722 310",
  "M657 354C657 310 664.300 310 664.300 268", "M636.3 298C682 298 668 440 722 440", "M685.3 298C703 298 700 310 720 310",
  "M685.3 420C715 420 692 310 722 310", "M657 476C657 425 664.300 435 664.300 378", "M742.3 283C742 340 782.300 325 782.300 372",
  "M748 281C740 320 736 350 733 400C730 430 728 440 724 440", "M849 258C798 258 797 370 773 510C756 640 750 811 697 811",
  "M792.3 418C792 400 783 400 782.3 382", "M753.3 420C738 420 738 440 722 440", "M636.3 420C670 420 680 440 720 440",
  "M613 399C640 425 660 440 720 440", "M604 392C622 396 616 425 635 425",
  "M519.3 372.700C568 372 590 386 610 396", "M568.3 373C652 373 630 310 722 310", "M450.3 413C595 413 590 312 722 310",
  "M401 413.300H450C560 413 600 440 720 440", "M465 422.300C535 422 535 440.700 604 440.700", "M402 428.300C490 428 510 440.700 604 440.700",
  "M519.3 384C570 384 555 440.700 604 440.700", "M519.3 384C530 460 533 520 543.300 633C547 720 555 811 580 811", "M494.3 384L488 438",
  "M498.3 350.700C512 351 516 365 519.3 384", "M380.3 390.300C465 390 470 600 490 650C506 740 530 811 575 811",
  "M456.3 516.700C498 517 503 600 515 640C527 730 535 805 575 811", "M474.3 519.700C474.300 600 483 640 495 700C507 770 535 811 578 811",
  "M509 519C509 560 505.300 560 505.300 618", "M506.300 618V745", "M504 618V752", "M543.3 633L505.3 623",
  "M474.3 637.700C474.300 695 505.300 690 505.300 738", "M456.3 635C508 635 518.300 700 518.300 764", "M452.3 664C520 690 525 811 578 811",
  "M506.3 620C506.300 710 545.300 685 545.300 764", "M493.7 764C494 745 505.300 757 505.300 742", "M518.3 764C518 748 505.300 757 505.300 742",
  "M452.3 537.700C446 580 444 700 441 811", "M327 741C385 690 370 562 447 562", "M331 760C400 740 370 562 447 562",
  "M404.7 766C432 750 415 562 447 562", "M434.3 766C442 720 444 640 446 562", "M438 811C442 730 445 650 448 562",
  "M440 811C441 835 445 850 452.3 856", "M452.3 664C445 675 444 720 440 811",
  "M380.3 766C428 766 405 681 446 681", "M327 745C370 700 385 681 446 681",
  "M327 636C470 640 480 811 560 811", "M327 639C450 650 420 811 560 811", "M327 651C470 640 520 590 722 590",
  "M327 681C560 681 690 766 961 766", "M327 680.500C500 681 640 766 883 766", "M327 680.500C460 681 530 760 760 766",
  "M327 681C430 681 430 762 583 766", "M327 681H446", "M331 766C420 790 450 811 565 811", "M330 766H434", "M380.3 766C450 770 460 811 565 811",
  "M456.3 766C512 766 510 811 565 811", "M341.3 781.700C392 782 388 811 438 811", "M327 863C365 826 395 811 448 811",
  "M327 877C410 860 430 811 565 811", "M327 889C555 888 500 827 718 827", "M545.3 764C575 795 610 827 718 827",
  "M584.7 783.300C575 788 574 798 569 810", "M621 783.300C588 783 596 681 566 681", "M658 783.300C600 783 625 562 566 562",
  "M518 764C540 765 560 766 583 766", "M692.3 766H722", "M692.3 766C710 766 700 815 718 826",
  "M727.3 555C702 572 722 740 699 811", "M727.3 652C702 665 716 790 699 811", "M727.7 258C703 320 718 640 697 811",
  "M727.7 397C709 440 712 700 697 811", "M732 310C708 340 714 640 696 811", "M720 440C708 500 712 700 698 811", "M698 811H578",
  "M698 811C735 811 725 770 760 766", "M698 811C785 808 785 766 845.700 766", "M698 811C790 811 810 768 883 766",
  "M698 811C830 808 840 766 933 766", "M698 811C870 811 870 766 961 766", "M698 811C880 811 930 766 1078 766", "M698 811C770 811 800 811 838 803",
  "M698 811C770 811 760 555 845.300 555", "M698 811C815 811 800 555 963.700 555", "M698 811C898 811 872 555 1082.300 555",
  "M807.7 652C672 652 690 562 568 562", "M727.3 555C690 560 640 562 568 562", "M807.7 555C740 557 680 562 568 562", "M727 554.700H964", "M727 553.500H846",
  "M744.3 608.700C795 609 790 616.700 840 616.700", "M744.3 710C800 710 785 616.700 840 616.700",
  "M877.3 612.700C910 612 920 619 955 619", "M858.7 652.500C930 652 890 459 958 459", "M925.3 410C926 480 900.300 470 900.300 532",
  "M906.7 439C907 485 900.300 490 900.300 532", "M948.7 581C948 550 908 565 900.3 542", "M1065 582.700C998 583 1022 459 958 459",
  "M1183 582.700C1062 580 1075 459 958 459", "M1020 438.300C975 438 1005 617 962 617", "M1068 409.300C1000 409 1027 617 962 617",
  "M1138 436C1050 436 1070 617 962 617", "M1180 409.300C1060 409 1075 617 962 617", "M977 656.700C1090 657 1060 475 1185 459.500",
  "M1095.7 656.700C1160 657 1135 500 1190 462", "M962 617C1010 620 1030 613 1082 613", "M964 617L1072 619", "M964 617H992",
  "M839 827C855 827 855 839 870.300 839", "M839 827C845 830 842 838 848 839", "M839 826.700C900 827 900 843 963 843", "M839 826.700C905 827 930 843 986 843",
  "M839 826.700C925 827 960 843 1080 843", "M839 826C935 826 970 843 1103 843", "M839 826.700C900 822 865 768 933 766",
  "M959 777L957.500 808", "M1076.3 777C1020 776 1022 811 963 811.300", "M722 765.700H760", "M845.7 765.700H1115", "M961 766H1078", "M846 839.300H870", "M963 842.700H986", "M1080 842.700H1103",
];

/* ---------- rulers ---------- */

const majorsX: [number, string][] = [[410.5, "-910"], [509.5, "0"], [608.5, "910"], [708.5, "1 820"], [807.5, "2 730"], [907.5, "3 640"], [1006.5, "4 550"], [1106.5, "5 460"]];
const majorsY: [number, string][] = [[143.5, "-5 460"], [243.5, "-4 550"], [342.5, "-3 640"], [442.5, "-2 730"], [541.5, "-1 820"], [641.5, "-910"], [740.5, "0"], [839.5, "910"], [939.5, "1 820"]];
const range = (a: number, b: number, step: number) => Array.from({ length: Math.floor((b - a) / step) + 1 }, (_, i) => Math.floor(a + i * step) + 0.5);

const RulerX = () => (
  <RulerSvg width={851} height={27} viewBox="327 68 851 27">
    <path d={range(330.8, 1178, 9.942).map((x) => `M${x} 86v8`).join("") + majorsX.map(([x]) => `M${x} 68v26`).join("") + "M327 94.500H1178"} stroke={EDGE} />
    {majorsX.map(([x, t]) => <text key={t} x={x + 3.500} y={81} letterSpacing=".2">{t}</text>)}
  </RulerSvg>
);
const RulerY = () => (
  <RulerSvg width={27} height={859} viewBox="300 95 27 859">
    <path d={range(104.1, 953, 9.94).map((y) => `M318 ${y}h8`).join("") + majorsY.map(([y]) => `M300 ${y}h26`).join("") + "M326.500 95V954M300 953.500H327"} stroke={EDGE} />
    {majorsY.map(([y, t]) => <text key={t} transform={`translate(313.500 ${y - 3.500}) rotate(-90)`} letterSpacing=".1">{t}</text>)}
  </RulerSvg>
);

/* ---------- data for the lists ---------- */

const layers: [string, "s" | "l" | "t"][] = [
  ["check-norma", "s"], ["check-norma copy 2", "s"], ["check-norma copy 3", "s"], ["check-norma", "s"],
  ["Line 2 Copy 3", "l"], ["Line 2 Copy 7", "l"], ["Line 2 Copy 6", "l"], ["Line 2 Copy 5", "l"], ["Line 2 Copy 4", "l"], ["Line 2 Copy 2", "l"],
  ["icns/table_sort", "s"], ["icns/table_sort copy 4", "s"], ["icns/table_sort copy 2", "s"], ["icns/table_sort", "s"], ["icns/table_sort copy 3", "s"], ["icns/table_sort copy", "s"],
  ["66576 -УК 983 Copy", "t"], ["66576 -УК 983", "t"], ["66576 -КК 868 Copy 3", "t"], ["66576 -КК 868 Copy 2", "t"],
  ["12.02.2017", "t"], ["22.12.2016 copy", "t"], ["ОФПС-12. Новая редак", "t"], ["ОФПС-12. Документаци Copy", "t"], ["Сотрудник", "t"], ["Статус", "t"],
];

const stripIcons = [
  <svg width="22" height="22" viewBox="0 0 22 22" fill="none" stroke="#666" strokeWidth="2"><path d="M2 13v7h18v-7" /><path d="M11 16V3M6.500 7L11 2.500 15.500 7" strokeWidth="1.800" /></svg>,
  <svg width="22" height="22" viewBox="0 0 22 22" fill="none" stroke="#666"><path d="M5 2.500h12M4 5.500h14" strokeWidth="1.200" /><path d="M3.500 13V9.500h15V13" strokeWidth="1.300" /><rect x="1" y="15" width="20" height="6" fill="#555" stroke="none" /></svg>,
  <svg width="22" height="28" viewBox="0 0 22 28" fill="none" stroke="#666"><rect x="1.500" y="4.500" width="19" height="19" strokeDasharray="1 1" /><rect x="4.500" y="7.500" width="5" height="5" fill="#bbb" /><path d="M12 8.500h6M12 11.500h6M4 15.500h14M4 18.500h14" /><circle cx="18.400" cy="24.300" r="3.500" fill="#458ef7" stroke="none" /></svg>,
  <svg width="22" height="22" viewBox="0 0 22 22" fill="none" stroke="#555"><rect x="1" y="1" width="9" height="9" fill="#666" stroke="none" /><rect x="12.500" y="1.500" width="8" height="8" strokeDasharray="2 1.200" /><rect x="1.500" y="12.500" width="8" height="8" strokeDasharray="2 1.200" /></svg>,
  <svg width="22" height="22" viewBox="0 0 22 22" fill="none" stroke="#666"><rect x="2.500" y="2.500" width="17" height="17" /><path d="M2.500 2.500h0M19.500 2.500h0M2.500 19.500h0M19.500 19.500h0" strokeWidth="2.600" strokeLinecap="square" /><path d="M2.500 19.500v-5L10 6.500l5 4.500-8 8.500z" fill="#ececec" /><path d="M9.500 7l3-3 5 4.500-3 3z" fill="#666" /></svg>,
  <svg width="22" height="22" viewBox="0 0 22 22" fill="none" stroke="#555"><path d="M12.500 4.500H1.500v16h16v-9" strokeWidth="1.200" /><path d="M17 1v8M13 5h8" strokeWidth="2" /><path d="M4 16l2-2.500L8 16zM7 16l4.500-6 4 6z" fill="#555" stroke="none" /></svg>,
];

const Updown = () => (
  <svg width="9" height="12" viewBox="0 0 9 12" fill="none" stroke="#8a8a8a" strokeWidth="1.200"><path d="M1.500 4.200l3-3 3 3M1.500 7.800l3 3 3-3" /></svg>
);

const AlignIcons = () => (
  <svg width="212" height="26" viewBox="1220 68 212 26">
    <g fill="#a0cdf8">
      <rect x="1232" y="77" width="3" height="11" rx="1" /><rect x="1255" y="81" width="11" height="3" rx="1" />
      <rect x="1288" y="77" width="10" height="3" /><rect x="1288" y="84" width="7" height="3" />
      <rect x="1312" y="77" width="11" height="3" /><rect x="1313.500" y="84" width="8" height="3" />
      <rect x="1338" y="77" width="10" height="3" /><rect x="1341" y="84" width="7" height="3" />
      <rect x="1363" y="77" width="3" height="11" /><rect x="1370" y="77" width="3" height="7" />
      <rect x="1388" y="77" width="3" height="11" /><rect x="1395" y="79" width="3" height="7" />
      <rect x="1413" y="77" width="3" height="10" /><rect x="1420" y="82" width="3" height="5" />
    </g>
    <path d="M1228.500 75v14M1239.500 75v14M1253 76.500h14M1253 88.500h14M1286.500 75v14M1317.500 75v2M1317.500 80v4M1317.500 87v2M1349.500 75v14M1361 75.500h14M1386 82.500h2M1391 82.500h4M1398 82.500h2M1411 88.500h14" stroke="#bdbdbd" />
    <path d="M1276.500 68v26" stroke="#dcdcdc" />
  </svg>
);

export default function App() {
  return (
    <Window>
      <Global />
      <Chrome>
        <TitleBar>
          <Light $c="#fc5b57" $b="#e2463f" /><Light $c="#fdbd2f" $b="#e0a028" /><Light $c="#28c93f" $b="#1fae30" />
          <Title>
            <svg width="12" height="16" viewBox="0 0 12 16">
              <defs><linearGradient id="lime" x1="0" y1="0" x2="0" y2="1"><stop offset="0" stopColor="#a6e800" /><stop offset="1" stopColor="#78d400" /></linearGradient></defs>
              <path d="M.5.5h7.500l3.500 3.500v11.500H.5z" fill="#fff" stroke="#bbb" strokeWidth=".8" /><path d="M3.500 5.500h5l1.500 2-4 4.500L2 7.500z" fill="#fba61b" />
            </svg>
            sberbank tehnology <Edited>— Edited</Edited>
            <svg width="8" height="6" viewBox="0 0 8 6" fill="none" stroke="#666" strokeWidth="1.400"><path d="M.8 1.200L4 4.200l3.200-3" /></svg>
          </Title>
        </TitleBar>
        <Toolbar>
          {tools.map(([id, label, l, r, off], i) => (
            <Tool key={id} $w={r - l} $gap={l - (i ? tools[i - 1][3] : 0)} $off={off}>
              <ToolIcon>{id === "colors" ? <Wheel /> : icons[id]}</ToolIcon>
              <ToolLabel>{label}</ToolLabel>
            </Tool>
          ))}
        </Toolbar>
      </Chrome>
      <Body>
        <Sidebar>
          <SideHead $h={27}>
            Pages
            <svg width="12" height="12" viewBox="0 0 12 12" stroke="#a3a3a3" strokeWidth="1.600"><path d="M0 6h12M6 0v12" /></svg>
          </SideHead>
          <PageList>
            <PageRow>Page 1</PageRow><PageRow $on>2</PageRow><PageRow>3</PageRow><PageRow $alt>serch</PageRow>
          </PageList>
          <SideHead $h={26} $muted>
            2
            <svg width="13" height="12" viewBox="0 0 13 12" fill="none" stroke="#a0a0a0"><rect x=".5" y=".5" width="12" height="11" rx="1.500" /><path d="M1 1.500h11" /><path d="M3.500 8.500h6l-3-3.500z" fill="#a0a0a0" stroke="none" /></svg>
          </SideHead>
          <LayerList>
            {layers.map(([name, kind], i) => (
              <LayerRow key={i}>
                <LayerIcon>
                  {kind === "s" ? <Sym /> : kind === "l" ? <svg width="14" height="14"><path d="M7 .5v13" stroke="#bdbdbd" strokeWidth="2" /></svg> : "Aa"}
                </LayerIcon>
                {name}
              </LayerRow>
            ))}
          </LayerList>
          <Footer>
            <Filter>
              <svg width="11" height="11" viewBox="0 0 11 11" fill="none" stroke="#777" strokeWidth="1.100"><circle cx="4.600" cy="4.600" r="4" /><path d="M7.500 7.500l3 3" /></svg>
              Filter
            </Filter>
            <FooterIcons>
              <svg width="12" height="12" viewBox="0 0 12 12" fill="none" stroke="#3f8ef7" strokeWidth="1.700"><path d="M1 4h7v7H1zM3.500 2V1H11v7.500H9.500" /></svg>
              <svg width="12" height="12" viewBox="0 0 12 12"><path d="M0 11.500c2-.5 3-1.500 4-3l2 1.500c-1.500 1.500-3.500 2-6 1.500zM3.800 8L11.500 0 12 1 7 9.800z" fill="#3f8ef7" /></svg>
              72
            </FooterIcons>
          </Footer>
        </Sidebar>
        <Center>
          <Corner />
          <RulerX />
          <RulerY />
          <Canvas>
            {boards.map(([name, x, y, h, art]) => (
              <Board key={`${name}${x}-${y}`} $x={x} $y={y} width={112} height={h} viewBox={`0 0 112 ${h}`}>{art}</Board>
            ))}
            <Loose />
            {boards.map(([name, x, y, , , lx, ly]) => (
              <BoardName key={`${name}${x}-${y}`} $x={lx} $y={ly}>{name}</BoardName>
            ))}
            <Links width={851} height={858} viewBox="327 95 851 858">
              <path d={paths.join("")} fill="none" stroke={BLUE} strokeWidth="1.800" />
              <g fill={BLUE}>
                {nodes.map(([x, y], i) => <circle key={i} cx={x} cy={y} r={6.900} />)}
                {arrows.map(([x, y, d], i) => <path key={i} d="M0 0L-12.700 -8.200V8.200Z" transform={`translate(${x} ${y}) rotate(${spin[d]})`} />)}
              </g>
            </Links>
          </Canvas>
        </Center>
        <Strip>
          <StripCell $h={27} $dark>
            <svg width="15" height="15" viewBox="0 0 15 15" fill="#a0a0a0"><path d="M7.500.5v3.700a3.300 3.300 0 0 0 0 6.600v3.700a7 7 0 0 1 0-14z" /><path d="M5 4.500l2.500-.3v6.600L5 10.500z" /><path d="M8.800.5H14v4.700L8.800 5zM8.800 14.500V9.800L14 9.600v4.900z" /></svg>
          </StripCell>
          {stripIcons.map((icon, i) => <StripCell key={i}>{icon}</StripCell>)}
          <StripCell $h={41} $last>
            <svg width="14" height="18" viewBox="0 0 14 18"><path d="M8.500 0L.5 10.500h5L4.500 18 13.500 7H8z" fill="#2a7af0" /></svg>
          </StripCell>
        </Strip>
        <Inspector>
          <AlignRow><AlignIcons /></AlignRow>
          <Group $h={116}>
            <Row $h={35}><RowName>Position</RowName><Col><Input />X</Col><Col $gap={16}><Input />Y</Col></Row>
            <Row $h={35}>
              <RowName>Size</RowName><Col><Input />Width</Col>
              <Lock><svg width="7" height="10" viewBox="0 0 7 10" fill="none" stroke="#a2a2a2"><path d="M1.500 5V2.500a1.700 1.700 0 0 1 3.500 0" /><rect x="0" y="4.500" width="7" height="5" fill="#a2a2a2" stroke="none" /></svg></Lock>
              <Col><Input />Height</Col>
            </Row>
            <Row $h={35}>
              <RowName>Transform</RowName><Col><Input />Rotate</Col>
              <Col $gap={16}>
                <Flip>
                  <svg width="13" height="11" viewBox="0 0 13 11"><path d="M5.500 0v11H0z" fill="#dcdcdc" /><path d="M7.500 0v11H13z" fill="#bcbcbc" /></svg>
                  <Divider />
                  <svg width="12" height="12" viewBox="0 0 12 12"><path d="M1 0v5h10z" fill="#dcdcdc" /><path d="M1 12V7h10z" fill="#bcbcbc" /></svg>
                </Flip>
                Flip
              </Col>
            </Row>
          </Group>
          <Group $h={65}>
            <Row $h={27}><RowName>Opacity</RowName><Slider><Knob /><Track /></Slider><Col $w={43}><Input /></Col></Row>
            <Row $h={22}><RowName>Blending</RowName><Select>Normal<Updown /></Select></Row>
          </Group>
          <Section>Fills</Section>
          <Section>Borders</Section>
          <Section>Shadows</Section>
          <Section>Inner Shadows</Section>
          <Section>Gaussian Blur<Updown /><Check /></Section>
        </Inspector>
      </Body>
    </Window>
  );
}
